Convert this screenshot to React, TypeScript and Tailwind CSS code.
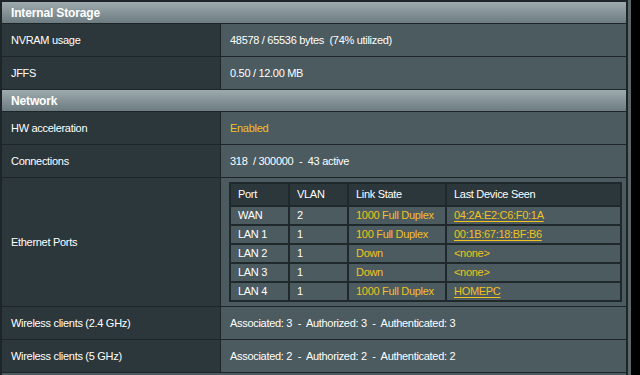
import React from "react";

type Row = { label: string; value?: React.ReactNode; tall?: boolean };

const ports = [
  { port: "WAN", vlan: "2", state: "1000 Full Duplex", device: "04:2A:E2:C6:F0:1A", link: true },
  { port: "LAN 1", vlan: "1", state: "100 Full Duplex", device: "00:1B:67:18:BF:B6", link: true },
  { port: "LAN 2", vlan: "1", state: "Down", device: "<none>", link: false },
  { port: "LAN 3", vlan: "1", state: "Down", device: "<none>", link: false },
  { port: "LAN 4", vlan: "1", state: "1000 Full Duplex", device: "HOMEPC", link: true },
];

const SectionHeader = ({ title }: { title: string }) => (
  <div className="h-[22px] flex items-center pl-[9px] border-b border-[#1e2528] bg-gradient-to-b from-[#9eabae] to-[#6d7c81] text-white font-bold text-[12px] tracking-[-0.15px]">
    {title}
  </div>
);

const InfoRow = ({ label, value, tall }: Row) => (
  <div className={`flex border-b border-[#1e2528] ${tall ? "h-[129px]" : "h-[33px]"}`}>
    <div className="w-[219px] shrink-0 flex items-center pl-[9px] bg-[#2c373b] border-r border-[#1e2528]">
      {label}
    </div>
    <div className="flex-1 flex items-center pl-[9px] bg-[#4b5b5f]">{value}</div>
  </div>
);

const EthernetTable = () => (
  <div className="grid grid-cols-[57px_57px_96px_173px] grid-rows-[21px_17px_17px_17px_17px_17px] gap-[2px] p-[2px] bg-[#1f282b] w-[393px] -ml-px">
    {["Port", "VLAN", "Link State", "Last Device Seen"].map((h) => (
      <div key={h} className="bg-[#2c373b] flex items-center pl-[7px]">
        {h}
      </div>
    ))}
    {ports.map((p) => (
      <React.Fragment key={p.port}>
        <div className="bg-[#4b5b5f] flex items-center pl-[7px]">{p.port}</div>
        <div className="bg-[#4b5b5f] flex items-center pl-[7px]">{p.vlan}</div>
        <div className="bg-[#4b5b5f] flex items-center pl-[7px] text-[#f2c21f]">{p.state}</div>
        <div className="bg-[#4b5b5f] flex items-center pl-[7px] text-[#f2c21f]">
          {p.link ? <span className="underline underline-offset-2">{p.device}</span> : p.device}
        </div>
      </React.Fragment>
    ))}
  </div>
);

export default function App() {
  return (
    <div className="w-[640px] h-[375px] flex bg-black overflow-hidden font-['Liberation_Sans',Arial,sans-serif] text-[11px] tracking-[-0.3px] text-white">
      <div className="w-[628px] h-full pl-[2px] pt-[2px] pr-[2px] bg-[#1e2528]">
        <div className="w-[624px] h-full bg-[#4b5b5f]">
          <SectionHeader title="Internal Storage" />
          <InfoRow label="NVRAM usage" value={<span className="whitespace-pre">48578 / 65536 bytes  (74% utilized)</span>} />
          <InfoRow label="JFFS" value="0.50 / 12.00 MB" />
          <SectionHeader title="Network" />
          <InfoRow label="HW acceleration" value={<span className="text-[#f2c21f]">Enabled</span>} />
          <InfoRow label="Connections" value={<span className="whitespace-pre">318  / 300000  -  43 active</span>} />
          <InfoRow label="Ethernet Ports" tall value={<EthernetTable />} />
          <InfoRow
            label="Wireless clients (2.4 GHz)"
            value={<span className="whitespace-pre">Associated: 3  -  Authorized: 3  -  Authenticated: 3</span>}
          />
          <InfoRow
            label="Wireless clients (5 GHz)"
            value={<span className="whitespace-pre">Associated: 2  -  Authorized: 2  -  Authenticated: 2</span>}
          />
        </div>
      </div>
      <div className="w-[3px] h-full bg-[#5a686c]" />
    </div>
  );
}
